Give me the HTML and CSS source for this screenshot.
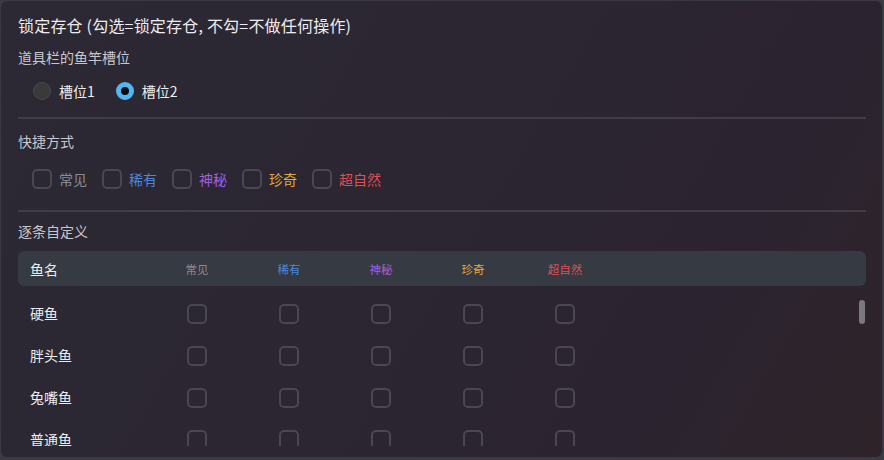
FILE: index.html
```html
<!DOCTYPE html>
<html lang="zh-CN">
<head>
<meta charset="utf-8">
<title>锁定存仓</title>
<link rel="stylesheet" href="styles.css">
</head>
<body>
<div class="panel">
  <div class="title">锁定存仓 (勾选=锁定存仓, 不勾=不做任何操作)</div>
  <div class="label">道具栏的鱼竿槽位</div>
  <div class="radios">
    <label class="opt"><span class="radio"></span><span class="opt-text">槽位1</span></label>
    <label class="opt"><span class="radio on"></span><span class="opt-text">槽位2</span></label>
  </div>
  <div class="divider first"></div>
  <div class="label sc">快捷方式</div>
  <div class="checks">
    <label class="opt"><span class="box"></span><span class="c-common">常见</span></label>
    <label class="opt"><span class="box"></span><span class="c-rare">稀有</span></label>
    <label class="opt"><span class="box"></span><span class="c-myst">神秘</span></label>
    <label class="opt"><span class="box"></span><span class="c-exotic">珍奇</span></label>
    <label class="opt"><span class="box"></span><span class="c-super">超自然</span></label>
  </div>
  <div class="divider second"></div>
  <div class="label custom">逐条自定义</div>
  <div class="thead">
    <div class="name">鱼名</div>
    <div class="col c-common">常见</div>
    <div class="col c-rare">稀有</div>
    <div class="col c-myst">神秘</div>
    <div class="col c-exotic">珍奇</div>
    <div class="col c-super">超自然</div>
  </div>
  <div class="rows">
    <div class="row"><div class="name">硬鱼</div><div class="cell"><span class="box"></span></div><div class="cell"><span class="box"></span></div><div class="cell"><span class="box"></span></div><div class="cell"><span class="box"></span></div><div class="cell"><span class="box"></span></div></div>
    <div class="row"><div class="name">胖头鱼</div><div class="cell"><span class="box"></span></div><div class="cell"><span class="box"></span></div><div class="cell"><span class="box"></span></div><div class="cell"><span class="box"></span></div><div class="cell"><span class="box"></span></div></div>
    <div class="row"><div class="name">兔嘴鱼</div><div class="cell"><span class="box"></span></div><div class="cell"><span class="box"></span></div><div class="cell"><span class="box"></span></div><div class="cell"><span class="box"></span></div><div class="cell"><span class="box"></span></div></div>
    <div class="row"><div class="name">普通鱼</div><div class="cell"><span class="box"></span></div><div class="cell"><span class="box"></span></div><div class="cell"><span class="box"></span></div><div class="cell"><span class="box"></span></div><div class="cell"><span class="box"></span></div></div>
    <div class="thumb"></div>
  </div>
</div>
</body>
</html>
```

FILE: styles.css
```css
* { box-sizing: border-box; }
html, body {
  margin: 0;
  padding: 0;
  width: 884px;
  height: 460px;
  overflow: hidden;
  background: #3b3a43;
  font-family: "Noto Sans CJK SC", "Noto Sans", sans-serif;
}
.panel {
  margin: 1px 0 0 1px;
  width: 881px;
  height: 456px;
  border-radius: 6px;
  background: linear-gradient(120deg, #2c2934 0%, #2b2632 45%, #2b2430 78%, #2e2329 100%);
  padding: 0 16px 0 17px;
  display: flex;
  flex-direction: column;
  overflow: hidden;
}
.title {
  margin-top: 12px;
  height: 24px;
  line-height: 24px;
  font-size: 16px;
  color: #ececf0;
  letter-spacing: 0.2px;
}
.label {
  height: 20px;
  line-height: 20px;
  font-size: 14px;
  color: #c9c7cd;
  margin-top: 10px;
}
.label.sc { margin-top: 12px; }
.label.custom { margin-top: 9px; }
.radios, .checks {
  display: flex;
  align-items: center;
  height: 24px;
  padding-left: 15px;
  font-size: 14px;
}
.radios { margin-top: 12px; gap: 21px; color: #ececef; }
.checks { margin-top: 16px; gap: 15px; padding-left: 14px; }
.opt {
  display: flex;
  align-items: center;
  gap: 8px;
  line-height: 20px;
}
.radio {
  width: 18px;
  height: 18px;
  border-radius: 50%;
  background: #3a393c;
  border: 1px solid #48474b;
}
.radio.on {
  background: #0c0d10;
  border: 5px solid #52b7f1;
}
.box {
  display: block;
  width: 20px;
  height: 20px;
  border: 2px solid #49474f;
  border-radius: 5px;
}
.checks .opt { gap: 7px; }
.divider {
  height: 2px;
  background: #403d46;
}
.divider.first { margin-top: 14px; }
.divider.second { margin-top: 19px; }
.c-common { color: #8c8b91; }
.c-rare { color: #4c86df; }
.c-myst { color: #a15ee6; }
.c-exotic { color: #e6a93b; }
.c-super { color: #df4f55; }
.thead, .row {
  display: grid;
  grid-template-columns: 121px repeat(5, 92px) 1fr;
  align-items: center;
  padding-left: 12px;
}
.thead {
  margin-top: 10px;
  height: 35px;
  border-radius: 6px;
  background: #363a43;
}
.thead .name {
  font-size: 14px;
  color: #ececef;
}
.thead .col {
  font-size: 11.5px;
  text-align: center;
}
.rows {
  position: relative;
  margin-top: 7px;
  height: 153px;
  overflow: hidden;
}
.row {
  height: 42px;
}
.row .name {
  font-size: 14px;
  line-height: 14px;
  padding-bottom: 2px;
  color: #ececef;
}
.cell {
  display: flex;
  justify-content: center;
}
.thumb {
  position: absolute;
  right: 1px;
  top: 7px;
  width: 6px;
  height: 24px;
  border-radius: 3px;
  background: #7a797f;
}
```
